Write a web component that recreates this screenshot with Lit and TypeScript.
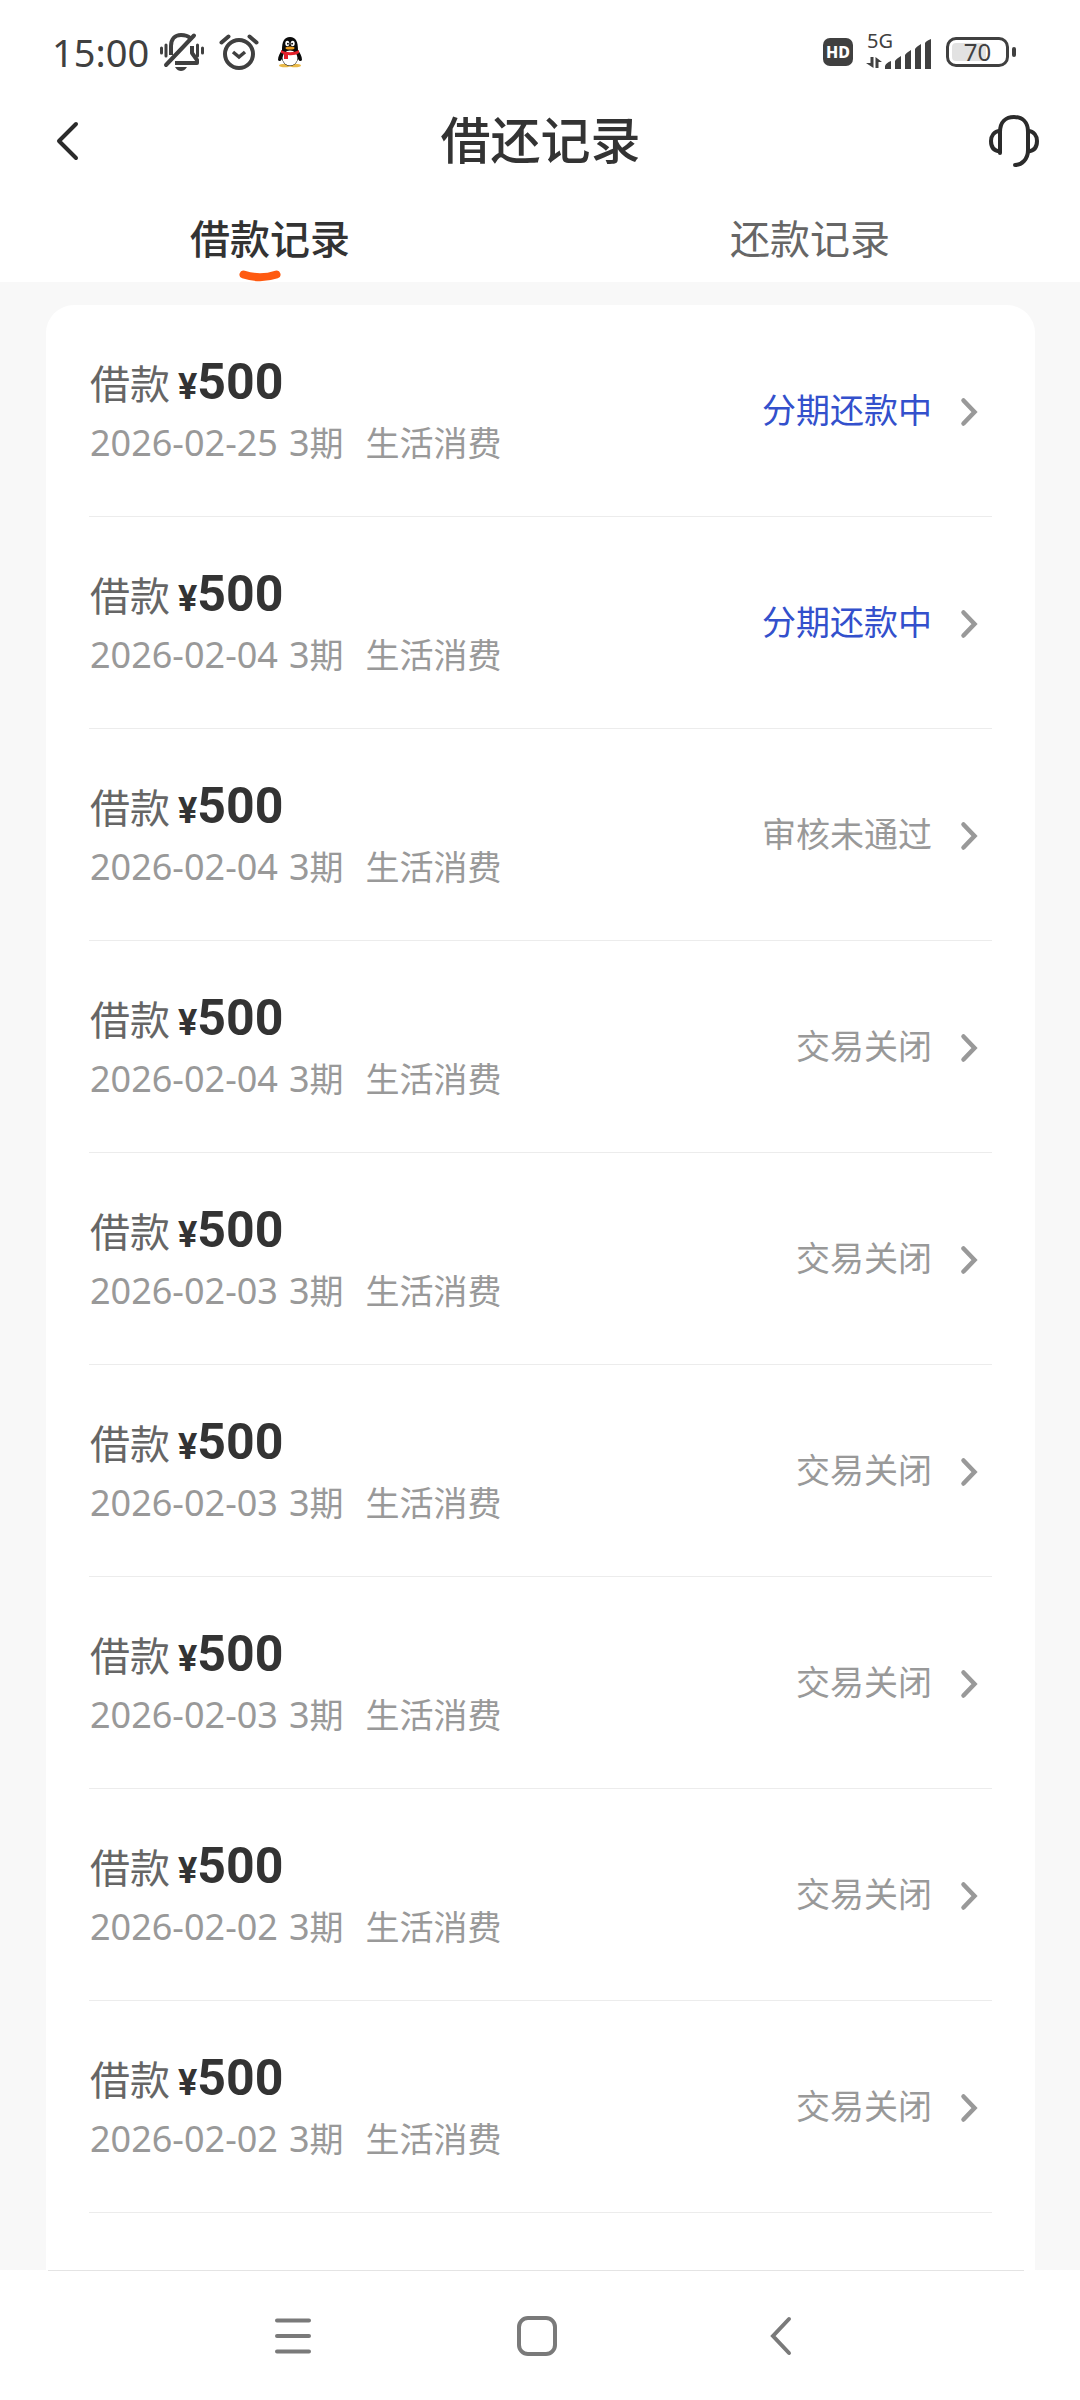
import { LitElement, html, css, svg } from "lit";
import { customElement, property, state } from "lit/decorators.js";

interface LoanRecord {
  amount: string;
  date: string;
  terms: number;
  purpose: string;
  status: string;
  active?: boolean;
}

const closed = (date: string): LoanRecord => ({
  amount: "500",
  date,
  terms: 3,
  purpose: "生活消费",
  status: "交易关闭",
});

const RECORDS: LoanRecord[] = [
  { ...closed("2026-02-25"), status: "分期还款中", active: true },
  { ...closed("2026-02-04"), status: "分期还款中", active: true },
  { ...closed("2026-02-04"), status: "审核未通过" },
  closed("2026-02-04"),
  closed("2026-02-03"),
  closed("2026-02-03"),
  closed("2026-02-03"),
  closed("2026-02-02"),
  closed("2026-02-02"),
];

@customElement("status-bar")
class StatusBar extends LitElement {
  static styles = css`
    :host {
      display: flex;
      align-items: center;
      justify-content: space-between;
      height: 104px;
      padding: 0 64px 0 52px;
      color: #404040;
      font-family: "Noto Sans", "Noto Sans CJK SC", sans-serif;
    }
    .group {
      display: flex;
      align-items: center;
    }
    .left {
      gap: 14px;
    }
    .right {
      gap: 13px;
    }
    .time {
      font-size: 38px;
      line-height: 48px;
      margin-right: -4px;
    }
    .qq {
      margin-left: 4px;
    }
    .hd {
      display: grid;
      place-items: center;
      width: 30px;
      height: 28px;
      border-radius: 7px;
      background: #404040;
      color: #fff;
      font-size: 16px;
      line-height: 16px;
      font-weight: 800;
    }
    .battery {
      display: flex;
      align-items: center;
      gap: 3px;
    }
    .cell {
      box-sizing: border-box;
      display: grid;
      place-items: center;
      width: 63px;
      height: 30px;
      border: 3px solid #404040;
      border-radius: 10px;
      font-size: 24px;
      line-height: 18px;
      background: linear-gradient(90deg, #e2e2e2 66%, #fff 66%) content-box;
      padding: 3px;
    }
    .tip {
      width: 4px;
      height: 10px;
      border-radius: 2px;
      background: #404040;
    }
    svg {
      display: block;
    }
    .net {
      font-size: 20px;
    }
  `;

  render() {
    return html`
      <div class="group left">
        <span class="time">15:00</span>
        <svg width="46" height="40" viewBox="0 0 46 40" fill="none" stroke="#404040" stroke-width="4" stroke-linecap="round" aria-hidden="true">
          <path d="M12 23 V14 C12 7 16 3 22 3 C26 3 29 4 31 6" stroke-linecap="butt" />
          <path d="M33 14 V21 L38 28 V31 H16" stroke-linecap="butt" stroke-linejoin="round" />
          <path d="M7 33 L35 3.500" />
          <path d="M16 35 H28 C26 38 24 39 22 39 C20 39 18 38 16 35 Z" fill="#404040" stroke="none" />
          <path d="M2.500 16 V21 M7 13 V24 M38.500 13 V24 M43.500 16 V21" stroke-width="3" />
        </svg>
        <svg width="40" height="38" viewBox="0 0 40 38" fill="none" stroke="#404040" stroke-width="4" aria-hidden="true">
          <circle cx="20" cy="21" r="14" />
          <path d="M2.500 9.500 L9.500 3.500 M30.500 3.500 L37.500 9.500" stroke-width="4" stroke-linecap="round" />
          <path d="M14 19 L20 24 L26 19" stroke-width="3.500" />
        </svg>
        <svg class="qq" width="26" height="32" viewBox="0 0 26 32" aria-hidden="true">
          <ellipse cx="8" cy="29.500" rx="6" ry="1.800" fill="#e9b949" />
          <ellipse cx="18" cy="29.500" rx="6" ry="1.800" fill="#e9b949" />
          <path d="M5 14 C5 6 7 1 13 1 C19 1 21 6 21 14 C23 17 25 20 25 24 C24 26 22 25 21 23 C20 27 17 30 13 30 C9 30 6 27 5 23 C4 25 2 26 1 24 C1 20 3 17 5 14 Z" fill="#0b0b0b" />
          <ellipse cx="13" cy="22" rx="7.500" ry="7.500" fill="#fff" />
          <ellipse cx="10.300" cy="7.500" rx="2" ry="2.800" fill="#fff" />
          <ellipse cx="15.700" cy="7.500" rx="2" ry="2.800" fill="#fff" />
          <circle cx="10.900" cy="7.700" r="0.900" fill="#000" />
          <circle cx="15.100" cy="7.700" r="0.900" fill="#000" />
          <ellipse cx="13" cy="12" rx="4.500" ry="1.500" fill="#f0a020" />
          <path d="M4 14 C9 17 17 17 22 14 V17 C19 19 15 19.500 11 19 V23 H7 V18 L4 17 Z" fill="#e3202b" />
        </svg>
      </div>
      <div class="group right">
        <span class="hd">HD</span>
        <svg class="net" width="67" height="54" viewBox="0 -8 67 54" fill="#404040" aria-label="5G">
          <text x="1" y="15">5G</text>
          <path d="M4.500 24 H7.500 V35 L0 30 H4.500 Z M9.500 24 L16 29 H12.500 V35 H9.500 Z" />
          <path d="M19 33 Q20 30 25 28 V36 H19 Z M29 28 Q30 26 35 23 V36 H29 Z M39 22 Q40 20 45 17 V36 H39 Z M49 16 Q50 14 55 11 V36 H49 Z M59 10 Q60 8 65 6 V36 H59 Z" />
        </svg>
        <span class="battery"><span class="cell">70</span><span class="tip"></span></span>
      </div>
    `;
  }
}

@customElement("loan-row")
class LoanRow extends LitElement {
  @property({ attribute: false }) record!: LoanRecord;

  static styles = css`
    :host {
      display: block;
    }
    .row {
      display: flex;
      align-items: center;
      justify-content: space-between;
      padding: 47px 14px 44px 1px;
      border-bottom: 1px solid #ececec;
      color: #999;
      text-decoration: none;
      font-size: 34px;
      line-height: 56px;
    }
    .title {
      display: flex;
      align-items: baseline;
      height: 60px;
      line-height: 60px;
      color: #333;
    }
    .label {
      font-size: 40px;
      color: #666;
      margin-right: 8px;
    }
    .yen,
    .amount {
      font-family: Roboto, "Noto Sans CJK SC", sans-serif;
      font-weight: 700;
    }
    .yen {
      font-size: 36px;
    }
    .amount {
      font-size: 50px;
    }
    .meta {
      display: flex;
      align-items: baseline;
      height: 60px;
      line-height: 60px;
    }
    .num {
      font-family: "Noto Sans", sans-serif;
      font-size: 36px;
    }
    .terms {
      margin: 0 22px 0 11px;
    }
    .state {
      display: flex;
      align-items: center;
      gap: 28px;
    }
    .status {
      margin-bottom: 6px;
    }
    .active {
      color: #3350cc;
    }
    svg {
      display: block;
    }
  `;

  render() {
    const r = this.record;
    return html`
      <a class="row" href="#detail">
        <div>
          <div class="title">
            <span class="label">借款</span><span class="yen">¥</span><span class="amount">${r.amount}</span>
          </div>
          <div class="meta">
            <span class="num">${r.date}</span>
            <span class="terms"><span class="num">${r.terms}</span>期</span>
            <span>${r.purpose}</span>
          </div>
        </div>
        <div class="state">
          <span class="status ${r.active ? "active" : ""}">${r.status}</span>
          <svg width="18" height="30" viewBox="0 0 18 30" fill="none" stroke="#999" stroke-width="4.500" stroke-linecap="round" aria-hidden="true">
            <path d="M3.500 3.500 L14.500 15 L3.500 26.500" />
          </svg>
        </div>
      </a>
    `;
  }
}

@customElement("app-root")
class AppRoot extends LitElement {
  @state() private tab = 0;

  static styles = css`
    :host {
      display: flex;
      flex-direction: column;
      min-height: 100vh;
      background: #fff;
      color: #333;
      font-family: "Noto Sans CJK SC", sans-serif;
    }
    button {
      border: 0;
      padding: 0;
      background: none;
      font: inherit;
      color: inherit;
    }
    svg {
      display: block;
    }
    .header {
      display: grid;
      grid-template-columns: 1fr auto 1fr;
      align-items: center;
      height: 74px;
      padding: 0 40px 0 55px;
    }
    .header .title {
      margin: 0 14px 8px 0;
      font-size: 50px;
      line-height: 66px;
      font-weight: 500;
    }
    .support {
      justify-self: end;
    }
    .tabs {
      display: flex;
      height: 104px;
    }
    .tab {
      flex: 1;
      display: flex;
      flex-direction: column;
      align-items: center;
      justify-content: flex-end;
      gap: 4px;
      font-size: 40px;
      line-height: 58px;
      color: #666;
    }
    .tab::after {
      content: "";
      height: 12px;
    }
    .selected {
      font-weight: 500;
      color: #333;
    }
    .selected::after {
      display: none;
    }
    .mark {
      margin-right: 20px;
    }
    .content {
      flex: 1;
      display: flex;
      padding: 23px 45px 0 46px;
      background: #f8f8f8;
    }
    .card {
      flex: 1;
      margin: 0;
      padding: 0 43px 57px;
      list-style: none;
      background: #fff;
      border-radius: 28px 28px 0 0;
    }
    .edge {
      margin: 0 56px 0 48px;
      border: 0;
      border-top: 1px solid #e4e4e4;
    }
    .nav {
      display: flex;
      justify-content: center;
      height: 129px;
      padding-right: 6px;
    }
    .key {
      display: grid;
      place-items: center;
      width: 244px;
    }
  `;

  private renderTab(label: string, index: number) {
    const on = this.tab === index;
    return html`
      <button class="tab ${on ? "selected" : ""}" role="tab" aria-selected=${on} @click=${() => (this.tab = index)}>
        <span>${label}</span>
        ${on
          ? html`<svg class="mark" width="42" height="12" viewBox="0 0 42 12" fill="none" stroke="#ff5a10" stroke-width="8" stroke-linecap="round">
              <path d="M4.500 4.500 Q21 10 37.500 4.500" />
            </svg>`
          : ""}
      </button>
    `;
  }

  private renderKey(label: string, shape: unknown) {
    return html`
      <button class="key" aria-label=${label}>
        <svg width="42" height="42" viewBox="0 0 42 42" fill="none" stroke="#7a7a7a" stroke-width="4" stroke-linecap="round">
          ${shape}
        </svg>
      </button>
    `;
  }

  render() {
    return html`
      <status-bar></status-bar>
      <header class="header">
        <button aria-label="返回">
          <svg width="26" height="42" viewBox="0 0 26 42" fill="none" stroke="#2b2b2b" stroke-width="4" stroke-linecap="round" stroke-linejoin="round">
            <path d="M21 4 L4 21 L21 38" />
          </svg>
        </button>
        <h1 class="title">借还记录</h1>
        <button class="support" aria-label="客服">
          <svg width="52" height="54" viewBox="0 0 52 54" fill="none" stroke="#2b2b2b" stroke-width="4">
            <path d="M12 39 V18 C12 8 18 3 26 3 C34 3 40 8 40 18 V36 C40 45 34 51 27 51" stroke-linecap="round" />
            <path d="M12 17 C6 17 3 22 3 27 C3 33 6 37 12 37.500" />
            <path d="M40 17 C46 17 49 22 49 27 C49 33 46 37 40 37.500" />
          </svg>
        </button>
      </header>
      <div class="tabs" role="tablist">
        ${this.renderTab("借款记录", 0)} ${this.renderTab("还款记录", 1)}
      </div>
      <main class="content">
        <ul class="card">
          ${RECORDS.map((r) => html`<li><loan-row .record=${r}></loan-row></li>`)}
        </ul>
      </main>
      <hr class="edge" />
      <nav class="nav">
        ${this.renderKey("菜单", svg`<path d="M5 5.500 H37 M5 21 H37 M5 36.500 H37" />`)}
        ${this.renderKey("主页", svg`<rect x="3" y="3" width="36" height="36" rx="9" />`)}
        ${this.renderKey("返回", svg`<path d="M29 4 L13 21 L29 38" />`)}
      </nav>
    `;
  }
}
